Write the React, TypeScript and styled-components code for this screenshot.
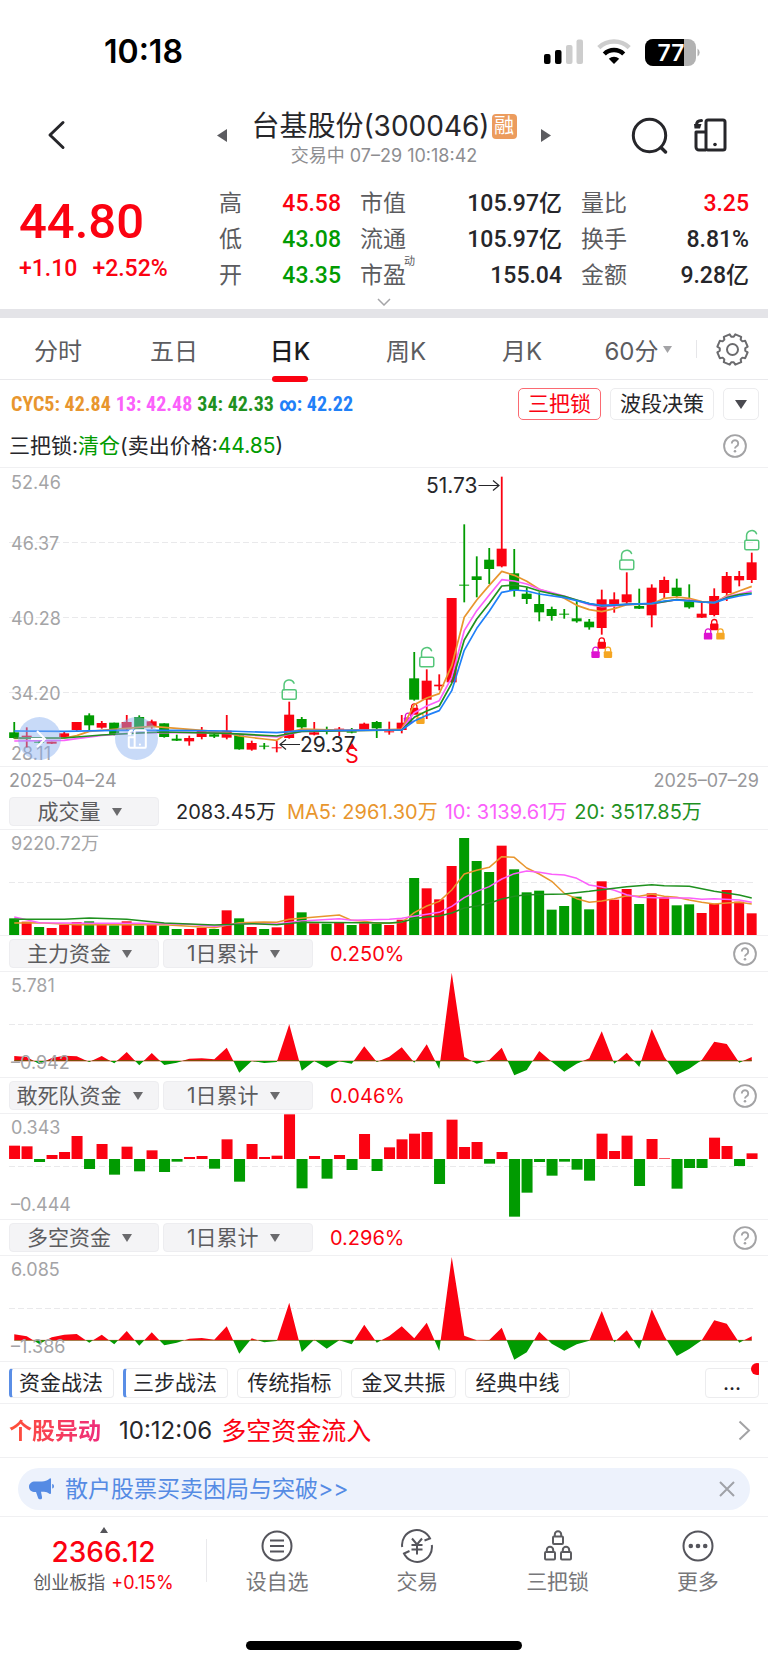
import React from "react";
import styled, { createGlobalStyle, css } from "styled-components";

const RED = "#fb0211";
const GREEN = "#019b01";
const ORANGE = "#e8962e";
const PINK = "#fb60fb";
const DARK_GREEN = "#1f911f";
const BLUE = "#1f80f8";
const INK = "#26262a";
const GREY = "#5c5c5f";
const MUTED = "#a4a4a6";
const LINE = "#f0f0f2";

const UI_FONT = `Inter, "Noto Sans CJK SC", sans-serif`;
const NUMBER_FONT = `Roboto, "Noto Sans CJK SC", sans-serif`;
const CONDENSED_FONT = `"Roboto Condensed", Roboto, "Noto Sans CJK SC", sans-serif`;

const GlobalStyle = createGlobalStyle`
  *, *::before, *::after { box-sizing: border-box; }
  body { margin: 0; background: #fff; color: ${INK}; font-family: ${UI_FONT}; }
  button, select { font: inherit; color: inherit; margin: 0; padding: 0; border: 0; background: none; }
  a { color: inherit; text-decoration: none; }
  svg { display: block; flex: none; }
  dl, dd, dt, h1, p { margin: 0; font-weight: inherit; }
`;

/* ---------- chart data (thirds of a pixel, measured from the plot's own origin) ---------- */

type Dir = "R" | "G";
type Candle = [Dir, number, number, number, number];
type Points = [number, number][];

const STEP = 12.5;
const FIRST = 14.25;
const cx = (i: number) => FIRST + STEP * i;

const candles: Candle[] = [
  ["G", 784, 815, 832, 834], ["R", 800, 825, 829, 860], ["G", 840, 843, 846, 848],
  ["R", 843, 843, 849, 850], ["R", 812, 818, 829, 832], ["R", 784, 784, 808, 814],
  ["G", 758, 764, 794, 812], ["R", 781, 787, 801, 804], ["G", 786, 786, 820, 824],
  ["R", 763, 784, 806, 808], ["G", 764, 769, 808, 810], ["R", 777, 782, 798, 804],
  ["G", 788, 788, 829, 831], ["G", 822, 834, 840, 841], ["R", 825, 832, 842, 855],
  ["R", 799, 808, 829, 836], ["G", 815, 821, 828, 832], ["R", 763, 810, 831, 836],
  ["G", 824, 824, 866, 867], ["R", 840, 847, 867, 870], ["G", 847, 855, 858, 866],
  ["R", 841, 860, 863, 875], ["R", 723, 762, 832, 834], ["G", 769, 775, 800, 812],
  ["R", 784, 815, 822, 824], ["G", 798, 808, 812, 821], ["R", 799, 804, 808, 826],
  ["G", 802, 812, 816, 818], ["R", 786, 789, 805, 806], ["G", 781, 784, 803, 832],
  ["R", 783, 812, 815, 822], ["R", 763, 786, 808, 818], ["G", 574, 653, 717, 720],
  ["R", 626, 660, 717, 775], ["R", 641, 672, 677, 689], ["R", 412, 412, 665, 665],
  ["G", 191, 372, 375, 425], ["G", 287, 347, 358, 410], ["G", 262, 297, 325, 370],
  ["R", 48, 264, 317, 320], ["G", 265, 338, 391, 408], ["G", 380, 399, 415, 430],
  ["G", 395, 430, 455, 482], ["G", 438, 445, 466, 480], ["G", 445, 459, 462, 474],
  ["G", 420, 473, 482, 486], ["G", 475, 483, 500, 507], ["R", 387, 416, 502, 522],
  ["R", 395, 416, 430, 456], ["R", 335, 401, 425, 430], ["G", 384, 436, 444, 445],
  ["R", 371, 381, 464, 500], ["R", 348, 358, 397, 412], ["G", 354, 381, 406, 412],
  ["G", 371, 422, 440, 444], ["R", 425, 459, 471, 472], ["R", 383, 406, 463, 467],
  ["R", 334, 346, 397, 421], ["R", 331, 346, 359, 377], ["R", 276, 305, 358, 367],
];

const cycLines: { color: string; pts: Points }[] = [
  { color: ORANGE, pts: [[0, 833], [4, 832], [5, 825], [6, 812], [9, 803], [10, 800], [11, 797], [13, 803], [15, 809], [17, 816], [18, 826], [20, 835], [21, 839], [22, 815], [23, 805], [26, 808], [29, 808], [31, 805], [32, 732], [33, 712], [34, 699], [35, 615], [36, 470], [37, 418], [38, 374], [39, 332], [40, 344], [41, 362], [42, 386], [43, 398], [44, 413], [45, 434], [46, 447], [47, 453], [48, 444], [49, 432], [51, 430], [52, 413], [53, 409], [54, 413], [55, 423], [56, 427], [57, 405], [58, 391], [59, 377]] },
  { color: PINK, pts: [[0, 841], [4, 839], [5, 834], [7, 824], [10, 816], [14, 815], [17, 818], [21, 829], [23, 812], [31, 807], [32, 756], [33, 736], [34, 720], [35, 650], [36, 510], [37, 450], [38, 403], [39, 357], [40, 361], [41, 370], [42, 386], [43, 396], [44, 406], [45, 419], [46, 432], [47, 438], [48, 436], [49, 431], [51, 430], [53, 417], [54, 418], [55, 424], [56, 426], [57, 408], [58, 400], [59, 391]] },
  { color: DARK_GREEN, pts: [[0, 832], [4, 832], [5, 829], [7, 823], [10, 817], [12, 814], [17, 818], [21, 826], [23, 812], [31, 808], [32, 770], [33, 751], [34, 736], [35, 668], [36, 538], [37, 475], [38, 428], [39, 376], [40, 373], [41, 379], [42, 391], [44, 407], [45, 418], [46, 429], [47, 436], [49, 431], [51, 429], [53, 417], [55, 424], [56, 426], [57, 411], [58, 402], [59, 397]] },
  { color: BLUE, pts: [[0, 811], [4, 812], [8, 809], [13, 809], [17, 811], [21, 816], [23, 810], [31, 808], [32, 781], [33, 764], [34, 750], [35, 690], [36, 569], [37, 503], [38, 452], [39, 395], [40, 388], [41, 391], [42, 400], [44, 411], [46, 429], [47, 434], [49, 431], [51, 428], [52, 421], [53, 418], [55, 424], [56, 426], [57, 414], [58, 406], [59, 400]] },
];

const volumeTops = [
  415, 425, 441, 444, 434, 426, 424, 434, 436, 424, 437, 433, 437, 447, 447, 443, 447, 391, 415, 441,
  447, 442, 347, 397, 430, 431, 427, 435, 430, 432, 435, 419, 294, 325, 358, 258, 174, 243, 276, 197,
  268, 337, 332, 389, 378, 350, 388, 304, 359, 327, 372, 340, 351, 376, 373, 399, 371, 330, 365, 400,
];

const volumeLines: { color: string; pts: Points }[] = [
  { color: ORANGE, pts: [[0, 429], [2, 428], [5, 434], [12, 434], [15, 441], [16, 443], [18, 428], [20, 426], [21, 427], [22, 418], [26, 405], [27, 421], [28, 424], [29, 430], [30, 430], [31, 427], [32, 398], [33, 378], [34, 364], [35, 330], [36, 282], [37, 271], [38, 262], [39, 230], [40, 232], [41, 264], [42, 282], [43, 304], [44, 340], [45, 356], [46, 367], [47, 363], [48, 356], [49, 347], [50, 349], [51, 342], [52, 349], [53, 352], [54, 360], [55, 367], [56, 372], [57, 369], [58, 367], [59, 372]] },
  { color: PINK, pts: [[0, 411], [1, 419], [2, 428], [6, 430], [10, 430], [14, 433], [16, 439], [18, 431], [21, 432], [23, 423], [26, 416], [27, 421], [30, 418], [31, 415], [32, 409], [33, 403], [34, 397], [35, 379], [36, 353], [37, 334], [38, 320], [39, 297], [40, 281], [41, 273], [42, 277], [43, 283], [44, 285], [45, 295], [46, 315], [47, 321], [48, 331], [49, 344], [50, 352], [52, 354], [54, 354], [55, 358], [56, 356], [58, 360], [59, 367]] },
  { color: DARK_GREEN, pts: [[0, 418], [4, 418], [6, 414], [9, 418], [12, 429], [16, 435], [19, 431], [21, 434], [23, 427], [30, 429], [31, 426], [32, 416], [33, 411], [34, 408], [35, 399], [36, 384], [37, 378], [38, 370], [39, 357], [40, 349], [41, 344], [44, 342], [46, 334], [47, 329], [49, 320], [51, 314], [52, 317], [54, 319], [56, 334], [58, 345], [59, 354]] },
];

const mainForce = [
  828, 831, 852, 834, 827, 829, 846, 828, 850, 816, 856, 819, 855, 848, 836, 835, 838, 803, 878, 843,
  849, 846, 733, 872, 843, 863, 844, 851, 799, 846, 830, 802, 848, 793, 867, 578, 831, 851, 840, 803,
  886, 870, 813, 845, 875, 851, 835, 754, 851, 818, 861, 747, 830, 884, 866, 840, 785, 792, 848, 831,
];

const dareTeam = [
  227, 229, 276, 255, 246, 198, 297, 222, 314, 230, 304, 241, 306, 275, 261, 258, 296, 208, 335, 222,
  261, 257, 133, 355, 258, 326, 255, 300, 192, 303, 232, 208, 191, 186, 342, 149, 231, 216, 281, 246,
  440, 368, 276, 317, 275, 299, 332, 191, 243, 197, 348, 207, 265, 356, 294, 294, 203, 228, 288, 250,
];

const longShort = [
  790, 796, 819, 799, 791, 789, 815, 791, 820, 780, 824, 784, 823, 815, 803, 801, 806, 766, 848, 802,
  814, 810, 695, 843, 806, 833, 808, 820, 761, 815, 795, 766, 802, 755, 840, 558, 794, 808, 807, 770,
  866, 844, 782, 818, 839, 820, 809, 720, 814, 778, 834, 715, 795, 855, 834, 808, 748, 758, 815, 796,
];

/* ---------- page parts ---------- */

const Page = styled.div`
  display: flex;
  flex-direction: column;
  min-height: 100vh;
  background: #fff;
`;

const StatusBar = styled.div`
  display: flex;
  justify-content: space-between;
  align-items: center;
  height: 98px;
  padding: 6px 67px 0 104px;
`;

const Clock = styled.time`
  font-size: 32px;
  font-weight: 600;
  line-height: 32px;
  color: #000;
`;

const StatusIcons = styled.div`
  display: flex;
  align-items: center;
  gap: 14px;
`;

const Header = styled.header`
  display: grid;
  grid-template-columns: 1fr auto 1fr;
  align-items: center;
  height: 74px;
  padding: 0 41px;
`;

const IconButton = styled.button`
  display: flex;
  align-items: center;
  justify-content: center;
`;

const BackButton = styled(IconButton)`
  justify-self: start;
  margin-left: 6px;
`;

const HeaderActions = styled.div`
  display: flex;
  justify-content: flex-end;
  align-items: center;
  gap: 25px;
`;

const StockSwitcher = styled.div`
  display: flex;
  align-items: center;
  gap: 24px;
`;

const StockTitle = styled.div`
  padding-top: 8px;
  text-align: center;
`;

const StockName = styled.h1`
  display: flex;
  align-items: center;
  gap: 2px;
  font-size: 28px;
  line-height: 34px;
`;

const MarginBadge = styled.span`
  width: 25px;
  height: 25px;
  border-radius: 4px;
  background: #ec9c5e;
  color: #fff;
  font-size: 20px;
  line-height: 24px;
  text-align: center;
`;

const TradeTime = styled.p`
  font-size: 18px;
  line-height: 26px;
  color: #8d8d90;
`;

const Quote = styled.section`
  display: grid;
  grid-template-columns: 181px 122fr 202fr 168fr;
  column-gap: 19px;
  padding: 14px 19px 0;
  font-family: ${NUMBER_FONT};
`;

const PriceBlock = styled.div`
  padding-top: 10px;
  color: ${RED};
  font-weight: 500;
`;

const Price = styled.p`
  font-size: 49px;
  line-height: 52px;
`;

const Change = styled.p`
  display: flex;
  gap: 15px;
  margin-top: 9px;
  font-size: 23px;
  line-height: 24px;
`;

const Stats = styled.dl`
  display: flex;
  flex-direction: column;
`;

const Stat = styled.div`
  display: flex;
  justify-content: space-between;
  align-items: center;
  height: 36px;
  font-size: 23px;
  line-height: 36px;
  white-space: nowrap;
`;

const StatLabel = styled.dt`
  position: relative;
  color: ${GREY};
`;

const Superscript = styled.sup`
  position: absolute;
  left: 100%;
  top: -5px;
  margin-left: -2px;
  font-size: 11px;
  line-height: 18px;
`;

const StatValue = styled.dd<{ $color?: string }>`
  font-weight: 500;
  color: ${(p) => p.$color ?? INK};
`;

const Expand = styled.button`
  display: flex;
  justify-content: center;
  align-items: center;
  height: 15px;
`;

const Divider = styled.div`
  height: 9px;
  background: #e4e4e8;
`;

const TabBar = styled.nav`
  display: flex;
  height: 62px;
  border-bottom: 1px solid #e9e9ec;
  padding-top: 1px;
`;

const Tab = styled.button<{ $active?: boolean }>`
  position: relative;
  flex: 1;
  display: flex;
  align-items: center;
  justify-content: center;
  gap: 4px;
  font-size: 24px;
  color: ${GREY};
  ${(p) =>
    p.$active &&
    css`
      color: #1c1c20;
      font-weight: 500;
      &::after {
        content: "";
        position: absolute;
        bottom: -3px;
        width: 36px;
        height: 6px;
        border-radius: 3px;
        background: ${RED};
      }
    `}
`;

const SettingsButton = styled(IconButton)`
  position: relative;
  width: 72px;
  &::before {
    content: "";
    position: absolute;
    left: 0;
    height: 18px;
    width: 1px;
    background: #e6e6e9;
  }
`;

const IndicatorBar = styled.div`
  display: flex;
  align-items: center;
  justify-content: space-between;
  height: 48px;
  padding: 0 9px 0 11px;
`;

const CycValues = styled.div`
  display: flex;
  gap: 5px;
  font-family: ${CONDENSED_FONT};
  font-size: 20px;
  font-weight: 700;
  line-height: 24px;
`;

const Tinted = styled.span<{ $color: string }>`
  color: ${(p) => p.$color};
`;

const PillGroup = styled.div`
  display: flex;
  gap: 9px;
`;

const Pill = styled.button<{ $active?: boolean }>`
  display: flex;
  align-items: center;
  justify-content: center;
  height: 32px;
  padding: 0 9px;
  min-width: 36px;
  border: 1px solid ${(p) => (p.$active ? "#fb6a72" : "#ececee")};
  border-radius: 5px;
  font-size: 21px;
  line-height: 28px;
  color: ${(p) => (p.$active ? RED : INK)};
`;

const SignalRow = styled.div`
  display: flex;
  align-items: center;
  justify-content: space-between;
  height: 40px;
  padding: 0 21px 3px 9px;
  border-bottom: 1px solid ${LINE};
  font-size: 21px;
  line-height: 28px;
`;

const ChartPanel = styled.div`
  position: relative;
  border-bottom: 1px solid ${LINE};
`;

const Plot = styled.svg`
  width: 100%;
  height: auto;
  overflow: visible;
`;

const AxisText = styled.text`
  font-family: ${UI_FONT};
  font-size: 18px;
  fill: ${MUTED};
`;

const NoteText = styled.text<{ $color?: string }>`
  font-family: ${UI_FONT};
  font-size: 21px;
  fill: ${(p) => p.$color ?? INK};
`;

const FloatingButton = styled.button<{ $left: string }>`
  position: absolute;
  left: ${(p) => p.$left};
  bottom: 6px;
  width: 43px;
  height: 43px;
  display: flex;
  align-items: center;
  justify-content: center;
  border-radius: 50%;
  background: rgba(134, 174, 240, 0.45);
`;

const DateRange = styled.div`
  display: flex;
  justify-content: space-between;
  height: 27px;
  padding: 0 9px;
  font-size: 18px;
  line-height: 28px;
  color: #98989b;
`;

const PanelHeader = styled.div`
  display: flex;
  align-items: center;
  gap: 4px;
  height: 36px;
  padding: 0 11px 0 9px;
  border-bottom: 1px solid ${LINE};
`;

const Dropdown = styled.label`
  display: flex;
  align-items: center;
  justify-content: center;
  gap: 11px;
  width: 150px;
  height: 29px;
  padding-right: 9px;
  border: 1px solid #ededf0;
  border-radius: 4px;
  background: #f4f4f6;
  color: ${GREY};
`;

const Select = styled.select`
  appearance: none;
  font-size: 21px;
  line-height: 27px;
  height: 27px;
`;

const PanelValues = styled.div`
  display: flex;
  flex: 1;
  gap: 7px;
  padding-left: 13px;
  font-size: 20px;
  line-height: 28px;
  white-space: nowrap;
`;

const FirstValue = styled.span`
  margin-right: 4px;
`;

const StrategyBar = styled.div`
  display: flex;
  align-items: center;
  gap: 9px;
  height: 42px;
  padding: 0 9px;
  border-bottom: 1px solid ${LINE};
`;

const Chip = styled.button<{ $marked?: boolean }>`
  height: 30px;
  width: 105px;
  border: 1px solid #ececee;
  border-left: ${(p) => (p.$marked ? "3px solid #5a8ee6" : "1px solid #ececee")};
  padding-right: ${(p) => (p.$marked ? "3px" : "0")};
  border-radius: 4px;
  font-size: 21px;
  line-height: 26px;
  white-space: nowrap;
`;

const MoreChip = styled(Chip)`
  position: relative;
  width: 54px;
  margin-left: auto;
`;

const DotClip = styled.span`
  position: absolute;
  top: -6px;
  right: -1px;
  width: 8px;
  height: 12px;
  overflow: hidden;
  &::before {
    content: "";
    display: block;
    width: 12px;
    height: 12px;
    border-radius: 50%;
    background: ${RED};
  }
`;

const AlertRow = styled.a`
  display: flex;
  align-items: center;
  height: 54px;
  padding: 0 17px 0 9px;
  border-bottom: 1px solid ${LINE};
  font-size: 24px;
  line-height: 32px;
`;

const AlertTag = styled.strong`
  margin-right: 18px;
  font-size: 23px;
  font-weight: 700;
  background: linear-gradient(90deg, #ff5036, #ee2c7c);
  background-clip: text;
  -webkit-background-clip: text;
  color: transparent;
`;

const AlertText = styled.span`
  flex: 1;
  margin-left: 9px;
  font-size: 25px;
  color: ${RED};
`;

const BannerArea = styled.div`
  padding: 10px 18px 6px;
  border-bottom: 1px solid ${LINE};
`;

const Banner = styled.div`
  display: flex;
  align-items: center;
  height: 42px;
  padding: 0 15px 0 11px;
  border-radius: 21px;
  background: #edf2fc;
  color: #558be4;
`;

const BannerLink = styled.a`
  flex: 1;
  margin-left: 10px;
  font-size: 23px;
  line-height: 32px;
`;

const BottomBar = styled.footer`
  display: flex;
  height: 88px;
`;

const IndexCell = styled.a`
  position: relative;
  width: 207px;
  display: flex;
  flex-direction: column;
  align-items: center;
  padding-top: 10px;
  color: ${RED};
  &::after {
    content: "";
    position: absolute;
    right: 0;
    top: 22px;
    width: 1px;
    height: 43px;
    background: #e9e9ec;
  }
`;

const IndexValue = styled.span`
  font-size: 28px;
  font-weight: 500;
  line-height: 38px;
`;

const IndexName = styled.span`
  display: flex;
  gap: 6px;
  font-size: 18px;
  line-height: 24px;
`;

const NavItem = styled.button`
  flex: 1;
  display: flex;
  flex-direction: column;
  align-items: center;
  padding-top: 12px;
  gap: 3px;
  font-size: 21px;
  line-height: 32px;
  color: #77777a;
`;

const HomeArea = styled.div`
  display: flex;
  justify-content: center;
  padding-top: 36px;
`;

const HomeIndicator = styled.div`
  width: 36%;
  height: 9px;
  border-radius: 5px;
  background: #000;
`;

/* ---------- icons ---------- */

const SignalIcon = () => (
  <svg width="39" height="26" viewBox="0 0 39 26" aria-hidden="true">
    <rect x="0" y="15" width="6.500" height="10" rx="2" fill="#000" />
    <rect x="11" y="11" width="6.500" height="14" rx="2" fill="#000" />
    <rect x="22" y="6" width="6.500" height="19" rx="2" fill="#cdcdcd" />
    <rect x="32.500" y="0.500" width="6.500" height="24.500" rx="2" fill="#cdcdcd" />
  </svg>
);

const WifiIcon = () => (
  <svg width="34" height="26" viewBox="0 0 34 26" aria-hidden="true">
    <path d="M1.800 8.700a22 22 0 0 1 30.400 0" fill="none" stroke="#cdcdcd" strokeWidth="4.500" />
    <path d="M7.300 15a14 14 0 0 1 19.400 0" fill="none" stroke="#000" strokeWidth="4.500" />
    <path d="M17 25l-5.200-5.300a7.600 7.600 0 0 1 10.400 0z" fill="#000" />
  </svg>
);

const BatteryIcon = () => (
  <svg width="56" height="27" viewBox="0 0 56 27" aria-label="77%">
    <defs>
      <clipPath id="battery-body">
        <rect width="51" height="27" rx="8" />
      </clipPath>
    </defs>
    <g clipPath="url(#battery-body)">
      <rect width="51" height="27" fill="#b2b2b2" />
      <rect width="39" height="27" fill="#000" />
    </g>
    <path d="M52.500 9.500a4 4.500 0 0 1 0 8z" fill="#b2b2b2" />
    <text x="26" y="22" textAnchor="middle" fontFamily="Inter" fontWeight="600" fontSize="23" fill="#fff">77</text>
  </svg>
);

const BackIcon = () => (
  <svg width="19" height="30" viewBox="0 0 19 30" aria-hidden="true">
    <path d="M16 2.500L3 15l13 12.500" fill="none" stroke={INK} strokeWidth="3" strokeLinecap="round" strokeLinejoin="round" />
  </svg>
);

const Triangle = ({ dir, width, height, color }: { dir: "left" | "right" | "up" | "down"; width: number; height: number; color: string }) => {
  const d = {
    left: `M${width} 0V${height}L0 ${height / 2}z`,
    right: `M0 0V${height}L${width} ${height / 2}z`,
    up: `M0 ${height}H${width}L${width / 2} 0z`,
    down: `M0 0H${width}L${width / 2} ${height}z`,
  }[dir];
  return (
    <svg width={width} height={height} viewBox={`0 0 ${width} ${height}`} aria-hidden="true">
      <path d={d} fill={color} />
    </svg>
  );
};

const SearchIcon = () => (
  <svg width="37" height="37" viewBox="0 0 37 37" aria-hidden="true">
    <circle cx="18.500" cy="18.500" r="16.200" fill="none" stroke={INK} strokeWidth="3" />
    <path d="M30.500 31l4 4" stroke={INK} strokeWidth="3.400" strokeLinecap="round" />
  </svg>
);

const RotateScreenIcon = ({ size = 34, color = INK, stroke = 3 }: { size?: number; color?: string; stroke?: number }) => (
  <svg width={size} height={size} viewBox="0 0 34 34" fill="none" stroke={color} strokeWidth={stroke} strokeLinejoin="round" aria-hidden="true">
    <rect x="13" y="2" width="19" height="30" rx="2" />
    <path d="M13 14H3V29a3 3 0 0 0 3 3H13" />
    <circle cx="22" cy="26.500" r="1.800" fill={color} stroke="none" />
    <path d="M8.500 2.500C5 2.500 3.500 4.500 3.500 7" strokeLinecap="round" />
    <path d="M1 6h7.500l-1.500 4.500H1.500z" fill={color} stroke="none" />
  </svg>
);

const ExpandIcon = () => (
  <svg width="14" height="8" viewBox="0 0 14 8" aria-hidden="true">
    <path d="M1 1l6 6 6-6" fill="none" stroke="#a5a5a8" strokeWidth="1.500" />
  </svg>
);

const gearPath = Array.from({ length: 8 }, (_, i) => {
  const at = (deg: number, r: number) => {
    const a = ((deg + i * 45 + 22.5) * Math.PI) / 180;
    return `${(16.5 + r * Math.cos(a)).toFixed(2)} ${(16.5 + r * Math.sin(a)).toFixed(2)}`;
  };
  return `${i ? "L" : "M"}${at(-17, 12.8)}L${at(-12, 15.4)}L${at(12, 15.4)}L${at(17, 12.8)}`;
}).join("") + "z";

const GearIcon = () => (
  <svg width="33" height="33" viewBox="0 0 33 33" fill="none" stroke="#6b6b6e" strokeWidth="2" strokeLinejoin="round" aria-hidden="true">
    <path d={gearPath} />
    <circle cx="16.500" cy="16.500" r="5.500" />
  </svg>
);

const HelpIcon = () => (
  <svg width="24" height="24" viewBox="0 0 24 24" fill="none" stroke="#a3a3a5" aria-hidden="true">
    <circle cx="12" cy="12" r="10.900" strokeWidth="1.900" />
    <path d="M8.800 9.400a3.200 3.200 0 1 1 4.800 2.800c-1.100.7-1.600 1.200-1.600 2.300" strokeWidth="1.900" />
    <circle cx="12" cy="17.300" r="1.300" fill="#a3a3a5" stroke="none" />
  </svg>
);

const HelpButton = () => (
  <IconButton aria-label="帮助">
    <HelpIcon />
  </IconButton>
);

const OpenLock = ({ x, y }: { x: number; y: number }) => (
  <g transform={`translate(${x} ${y})`} fill="none" stroke="#55c67a" strokeWidth="1.500" strokeLinecap="round">
    <rect x="-7" y="-10" width="14" height="9.500" rx="1.500" />
    <path d="M-5.200 -10V-14.500A5.200 5.200 0 0 1 4.800 -16.500" />
  </g>
);

const ClosedLock = ({ x, y, color }: { x: number; y: number; color: string }) => (
  <g transform={`translate(${x} ${y})`}>
    <rect x="-4.200" y="4.500" width="8.400" height="6.800" rx="1.200" fill={color} />
    <path d="M-2.700 5V3.200a2.700 2.700 0 0 1 5.400 0V5" fill="none" stroke={color} strokeWidth="1.300" />
  </g>
);

const LockTrio = ({ x, y }: { x: number; y: number }) => (
  <>
    <ClosedLock x={x} y={y} color={RED} />
    <ClosedLock x={x - 6.2} y={y + 9.3} color="#dd12d0" />
    <ClosedLock x={x + 6.2} y={y + 9.3} color="#f5a623" />
  </>
);

const MegaphoneIcon = () => (
  <svg width="26" height="22" viewBox="0 0 26 22" fill="#558be4" aria-hidden="true">
    <path d="M6 3.500h7c3 0 5-1 7.500-2.800.8-.6 1.500-.4 1.500.6V15c0 1-.8 1.200-1.600.7-1.700-1.100-3.200-1.700-5.400-1.900H12l1 5.200c.3 1.500-.4 2.300-1.700 2.300-1.200 0-1.900-.5-2.300-1.600L7 14H6C2.800 14 0 12 0 8.700 0 5.500 2.800 3.500 6 3.500z" />
    <path d="M23.200 6c2.400.4 2.400 4.200 0 4.600z" />
  </svg>
);

const CloseIcon = () => (
  <svg width="16" height="16" viewBox="0 0 16 16" aria-hidden="true">
    <path d="M1 1l14 14M15 1L1 15" stroke="#a0a2a8" strokeWidth="2" />
  </svg>
);

const ChevronRight = () => (
  <svg width="13" height="21" viewBox="0 0 13 21" aria-hidden="true">
    <path d="M1.500 1.500l9.500 9-9.500 9" fill="none" stroke="#a3a3a5" strokeWidth="2" />
  </svg>
);

const navStroke = { fill: "none", stroke: "#55555c", strokeWidth: 2 } as const;

const ListIcon = () => (
  <svg width="34" height="34" viewBox="0 0 34 34" {...navStroke} aria-hidden="true">
    <circle cx="17" cy="17" r="14.500" />
    <path d="M10 11.500h14M10 17h14M10 22.500h14" strokeWidth="2.200" />
  </svg>
);

const TradeIcon = () => (
  <svg width="34" height="34" viewBox="0 0 34 34" {...navStroke} aria-hidden="true">
    <path d="M2.200 18A14.700 14.700 0 0 1 30 9.500l-5.500 2" />
    <path d="M31.800 16A14.700 14.700 0 0 1 4 24.500l5.500-2.500" />
    <path d="M12 9.500l5 6 5-6M17 15.500v10M11.500 16h11M11.500 20.500h11" />
  </svg>
);

const NavLock = ({ x, y }: { x: number; y: number }) => (
  <g transform={`translate(${x} ${y})`}>
    <rect x="-5" y="6" width="10" height="7.500" rx="1" />
    <path d="M-3.200 6V4a3.200 3.200 0 0 1 6.400 0v2" />
  </g>
);

const LocksIcon = () => (
  <svg width="34" height="34" viewBox="0 0 34 34" {...navStroke} stroke="#5c5c60" aria-hidden="true">
    <NavLock x={17} y={1.5} />
    <NavLock x={9} y={17} />
    <NavLock x={25} y={17} />
  </svg>
);

const MoreIcon = () => (
  <svg width="34" height="34" viewBox="0 0 34 34" {...navStroke} aria-hidden="true">
    <circle cx="17" cy="17" r="14.500" />
    {[9.8, 17, 24.2].map((x) => (
      <circle key={x} cx={x} cy="17" r="2.300" fill="#55555c" stroke="none" />
    ))}
  </svg>
);

/* ---------- charts ---------- */

const Grid = ({ y }: { y: number }) => (
  <path d={`M9 ${y}H756`} stroke="#e9e9eb" strokeWidth="1" strokeDasharray="6 3" />
);

const line = (pts: Points, origin: number) =>
  pts.map(([i, v], n) => `${n ? "L" : "M"}${cx(i).toFixed(2)} ${((v - origin) / 3).toFixed(2)}`).join("");

const CandleChart = () => {
  const o = 22;
  const y = (v: number) => (v - o) / 3;
  return (
    <Plot viewBox="0 0 768 298" role="img" aria-label="日K线图">
      {[74, 149, 224].map((g) => <Grid key={g} y={g + 0.5} />)}
      {["52.46", "46.37", "40.28", "34.20", "28.11"].map((t, i) => (
        <AxisText key={t} x="11" y={[21, 82, 157, 232, 292][i]}>{t}</AxisText>
      ))}
      <OpenLock x={cx(22)} y={y(717)} />
      <OpenLock x={cx(33)} y={y(620)} />
      <OpenLock x={cx(49)} y={y(328)} />
      <OpenLock x={cx(59)} y={y(269)} />
      {candles.map(([dir, high, top, bottom, low], i) => {
        const fill = dir === "R" ? RED : GREEN;
        return (
          <g key={i} fill={fill}>
            <rect x={cx(i) - 0.9} y={y(high)} width="1.800" height={(low - high) / 3} />
            <rect x={cx(i) - 5.1} y={y(top)} width="10" height={(bottom - top) / 3} />
          </g>
        );
      })}
      <LockTrio x={cx(32)} y={y(728)} />
      <LockTrio x={cx(47)} y={y(530)} />
      <LockTrio x={cx(56)} y={y(475)} />
      {cycLines.map((l) => (
        <path key={l.color} d={line(l.pts, o)} fill="none" stroke={l.color} strokeWidth="1.700" strokeLinejoin="round" />
      ))}
      <NoteText x="426" y="25">51.73</NoteText>
      <path d="M478.500 17.500h20M493 12.500l6 5-6 5" fill="none" stroke={INK} strokeWidth="1.200" />
      <NoteText x="300" y="284">29.37</NoteText>
      <path d="M300 276.500h-20M286 271.500l-6 5 6 5" fill="none" stroke={INK} strokeWidth="1.200" />
      <path d="M348.500 281l3.500-6 3.500 6z" fill={RED} />
      <NoteText x="352" y="295" textAnchor="middle" $color={RED}>S</NoteText>
    </Plot>
  );
};

const VolumeChart = () => {
  const o = 150;
  return (
    <Plot viewBox="0 0 768 105" role="img" aria-label="成交量">
      <Grid y={52.5} />
      <AxisText x="11" y="20">9220.72万</AxisText>
      {volumeTops.map((t, i) => (
        <rect key={i} x={cx(i) - 5.1} y={(t - o) / 3} width="10" height={105 - (t - o) / 3} fill={candles[i][0] === "R" ? RED : GREEN} />
      ))}
      {volumeLines.map((l) => (
        <path key={l.color} d={line(l.pts, o)} fill="none" stroke={l.color} strokeWidth="1.500" strokeLinejoin="round" />
      ))}
    </Plot>
  );
};

type FlowProps = { id: string; values: number[]; origin: number; zero: number; max: string; min: string };

const AreaChart = ({ id, values, origin, zero, max, min }: FlowProps) => {
  const z = (zero - origin) / 3;
  const d = `M${cx(0)} ${z}` + values.map((v, i) => `L${cx(i)} ${((v - origin) / 3).toFixed(2)}`).join("") + `L${cx(values.length - 1)} ${z}z`;
  return (
    <Plot viewBox="0 0 768 105" role="img" aria-label={id}>
      <defs>
        <clipPath id={`${id}-up`}><rect width="768" height={z + 0.4} /></clipPath>
        <clipPath id={`${id}-down`}><rect y={z - 0.4} width="768" height={105} /></clipPath>
      </defs>
      <Grid y={52.5} />
      <path d={`M${cx(0)} ${z}H${cx(59)}`} stroke="#c8583a" strokeWidth="0.800" />
      <path d={d} fill={RED} clipPath={`url(#${id}-up)`} />
      <path d={d} fill={GREEN} clipPath={`url(#${id}-down)`} />
      <AxisText x="11" y="20">{max}</AxisText>
      <AxisText x="11" y="97">{min}</AxisText>
    </Plot>
  );
};

const BarChart = ({ id, values, origin, zero, max, min }: FlowProps) => {
  const z = (zero - origin) / 3;
  return (
    <Plot viewBox="0 0 768 105" role="img" aria-label={id}>
      <Grid y={52.5} />
      <AxisText x="11" y="20">{max}</AxisText>
      <AxisText x="11" y="97">{min}</AxisText>
      {values.map((v, i) => {
        const top = (v - origin) / 3;
        return (
          <rect key={i} x={cx(i) - 5.2} y={Math.min(top, z)} width="11" height={Math.abs(z - top)} fill={top < z ? RED : GREEN} />
        );
      })}
    </Plot>
  );
};

const Picker = ({ label, value }: { label: string; value: string }) => (
  <Dropdown>
    <Select aria-label={label} defaultValue={value}>
      <option>{value}</option>
    </Select>
    <Triangle dir="down" width={10} height={8} color="#6a6a6d" />
  </Dropdown>
);

const FlowPanel = ({ name, value, children }: { name: string; value: string; children: React.ReactNode }) => (
  <section>
    <PanelHeader>
      <Picker label="指标" value={name} />
      <Picker label="周期" value="1日累计" />
      <PanelValues>
        <Tinted $color={RED}>{value}</Tinted>
      </PanelValues>
      <HelpButton />
    </PanelHeader>
    <ChartPanel>{children}</ChartPanel>
  </section>
);

const stats: { label: string; value: string; color?: string; sup?: string }[][] = [
  [
    { label: "高", value: "45.58", color: RED },
    { label: "低", value: "43.08", color: GREEN },
    { label: "开", value: "43.35", color: GREEN },
  ],
  [
    { label: "市值", value: "105.97亿" },
    { label: "流通", value: "105.97亿" },
    { label: "市盈", value: "155.04", sup: "动" },
  ],
  [
    { label: "量比", value: "3.25", color: RED },
    { label: "换手", value: "8.81%" },
    { label: "金额", value: "9.28亿" },
  ],
];

export default function App() {
  return (
    <Page>
      <GlobalStyle />
      <StatusBar>
        <Clock>10:18</Clock>
        <StatusIcons>
          <SignalIcon />
          <WifiIcon />
          <BatteryIcon />
        </StatusIcons>
      </StatusBar>

      <Header>
        <BackButton aria-label="返回"><BackIcon /></BackButton>
        <StockSwitcher>
          <IconButton aria-label="上一只">
            <Triangle dir="left" width={10} height={13} color="#5c5c60" />
          </IconButton>
          <StockTitle>
            <StockName>
              台基股份(300046)
              <MarginBadge>融</MarginBadge>
            </StockName>
            <TradeTime>交易中 07–29 10:18:42</TradeTime>
          </StockTitle>
          <IconButton aria-label="下一只">
            <Triangle dir="right" width={10} height={13} color="#5c5c60" />
          </IconButton>
        </StockSwitcher>
        <HeaderActions>
          <IconButton aria-label="搜索"><SearchIcon /></IconButton>
          <IconButton aria-label="横屏"><RotateScreenIcon /></IconButton>
        </HeaderActions>
      </Header>

      <Quote>
        <PriceBlock>
          <Price>44.80</Price>
          <Change>
            <span>+1.10</span>
            <span>+2.52%</span>
          </Change>
        </PriceBlock>
        {stats.map((group, n) => (
          <Stats key={n}>
            {group.map((s) => (
              <Stat key={s.label}>
                <StatLabel>
                  {s.label}
                  {s.sup && <Superscript>{s.sup}</Superscript>}
                </StatLabel>
                <StatValue $color={s.color}>{s.value}</StatValue>
              </Stat>
            ))}
          </Stats>
        ))}
      </Quote>
      <Expand aria-label="展开"><ExpandIcon /></Expand>
      <Divider />

      <TabBar>
        <Tab>分时</Tab>
        <Tab>五日</Tab>
        <Tab $active>日K</Tab>
        <Tab>周K</Tab>
        <Tab>月K</Tab>
        <Tab>
          60分
          <Triangle dir="down" width={9} height={7} color="#a3a3a6" />
        </Tab>
        <SettingsButton aria-label="设置"><GearIcon /></SettingsButton>
      </TabBar>

      <IndicatorBar>
        <CycValues>
          <Tinted $color={ORANGE}>CYC5: 42.84</Tinted>
          <Tinted $color={PINK}>13: 42.48</Tinted>
          <Tinted $color={DARK_GREEN}>34: 42.33</Tinted>
          <Tinted $color={BLUE}>∞: 42.22</Tinted>
        </CycValues>
        <PillGroup>
          <Pill $active>三把锁</Pill>
          <Pill>波段决策</Pill>
          <Pill aria-label="更多指标">
            <Triangle dir="down" width={12} height={9} color="#4a4a50" />
          </Pill>
        </PillGroup>
      </IndicatorBar>
      <SignalRow>
        <span>
          三把锁:<Tinted $color={GREEN}>清仓</Tinted>(卖出价格:<Tinted $color={GREEN}>44.85</Tinted>)
        </span>
        <HelpButton />
      </SignalRow>

      <ChartPanel>
        <CandleChart />
        <FloatingButton $left="18px" aria-label="展开侧栏">
          <svg width="20" height="20" viewBox="0 0 20 20" fill="none" stroke="#fff" strokeWidth="2" aria-hidden="true">
            <path d="M7 2l8 8-8 8M1 10h12" />
          </svg>
        </FloatingButton>
        <FloatingButton $left="115px" aria-label="横屏查看">
          <RotateScreenIcon size={20} color="#fff" stroke={3.4} />
        </FloatingButton>
      </ChartPanel>
      <DateRange>
        <time>2025–04–24</time>
        <time>2025–07–29</time>
      </DateRange>

      <section>
        <PanelHeader>
          <Picker label="指标" value="成交量" />
          <PanelValues>
            <FirstValue>2083.45万</FirstValue>
            <Tinted $color={ORANGE}>MA5: 2961.30万</Tinted>
            <Tinted $color={PINK}>10: 3139.61万</Tinted>
            <Tinted $color={DARK_GREEN}>20: 3517.85万</Tinted>
          </PanelValues>
        </PanelHeader>
        <ChartPanel><VolumeChart /></ChartPanel>
      </section>

      <FlowPanel name="主力资金" value="0.250%">
        <AreaChart id="main-force" values={mainForce} origin={576} zero={843} max="5.781" min="–0.942" />
      </FlowPanel>
      <FlowPanel name="敢死队资金" value="0.046%">
        <BarChart id="dare-team" values={dareTeam} origin={132} zero={267} max="0.343" min="–0.444" />
      </FlowPanel>
      <FlowPanel name="多空资金" value="0.296%">
        <AreaChart id="long-short" values={longShort} origin={555} zero={808} max="6.085" min="–1.386" />
      </FlowPanel>

      <StrategyBar>
        <Chip $marked>资金战法</Chip>
        <Chip $marked>三步战法</Chip>
        <Chip>传统指标</Chip>
        <Chip>金叉共振</Chip>
        <Chip>经典中线</Chip>
        <MoreChip aria-label="更多战法">
          ...
          <DotClip />
        </MoreChip>
      </StrategyBar>

      <AlertRow href="#alerts">
        <AlertTag>个股异动</AlertTag>
        <time>10:12:06</time>
        <AlertText>多空资金流入</AlertText>
        <ChevronRight />
      </AlertRow>

      <BannerArea>
        <Banner>
          <MegaphoneIcon />
          <BannerLink href="#promo">散户股票买卖困局与突破&gt;&gt;</BannerLink>
          <IconButton aria-label="关闭"><CloseIcon /></IconButton>
        </Banner>
      </BannerArea>

      <BottomBar>
        <IndexCell href="#index">
          <Triangle dir="up" width={8} height={6} color="#55555a" />
          <IndexValue>2366.12</IndexValue>
          <IndexName>
            <Tinted $color={GREY}>创业板指</Tinted>
            +0.15%
          </IndexName>
        </IndexCell>
        <NavItem><ListIcon />设自选</NavItem>
        <NavItem><TradeIcon />交易</NavItem>
        <NavItem><LocksIcon />三把锁</NavItem>
        <NavItem><MoreIcon />更多</NavItem>
      </BottomBar>
      <HomeArea>
        <HomeIndicator />
      </HomeArea>
    </Page>
  );
}
